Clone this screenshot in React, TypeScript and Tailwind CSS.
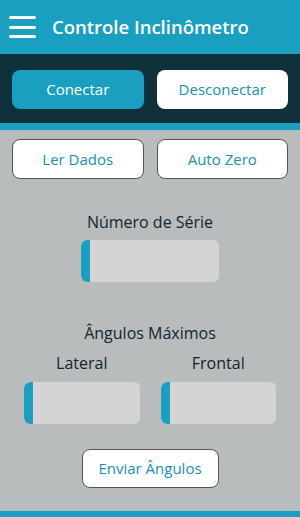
import React from "react";

const font = { fontFamily: '"Open Sans", "Noto Sans", sans-serif' };

const Field = ({ className = "" }: { className?: string }) => (
    <div className={`flex h-[42px] rounded-[6px] bg-[#d4d4d4] overflow-hidden ${className}`}>
        <div className="w-[9px] bg-[#1a9fc1] rounded-l-[6px]" />
    </div>
);

export default function App() {
    return (
        <div className="flex flex-col w-[300px] h-[517px] bg-[#b8bcbd] font-['Open_Sans',sans-serif]" style={font}>
            {/* Header */}
            <div className="flex items-center h-[54px] bg-[#1a9fc1] px-[9px] shrink-0">
                <div className="flex flex-col gap-[6.5px] w-[27px]">
                    <span className="block h-[3px] rounded-full bg-white" />
                    <span className="block h-[3px] rounded-full bg-white" />
                    <span className="block h-[3px] rounded-full bg-white" />
                </div>
                <h1 className="ml-[16px] text-[18.5px] font-semibold text-white leading-none">Controle Inclinômetro</h1>
            </div>

            {/* Connection bar */}
            <div className="grid grid-cols-2 gap-[13px] bg-[#0f313c] px-[12px] pt-[16px] pb-[14px] shrink-0">
                <button className="h-[39px] rounded-[8px] bg-[#1a9fc1] text-white text-[15px]">Conectar</button>
                <button className="h-[39px] rounded-[8px] bg-white text-[#1a8fb0] text-[15px]">Desconectar</button>
            </div>
            <div className="h-[7px] bg-[#1a9fc1] shrink-0" />

            {/* Content */}
            <div className="flex flex-col flex-1 px-[12px]">
                <div className="grid grid-cols-2 gap-[13px] mt-[9px]">
                    <button className="h-[40px] rounded-[8px] bg-white border border-[#555] text-[#1a8fb0] text-[15px]">Ler Dados</button>
                    <button className="h-[40px] rounded-[8px] bg-white border border-[#555] text-[#1a8fb0] text-[15px]">Auto Zero</button>
                </div>

                <p className="mt-[32px] text-center text-[16px] leading-[22px] text-[#10262e]">Número de Série</p>
                <Field className="mt-[7px] w-[138px] mx-auto" />

                <p className="mt-[40px] text-center text-[16px] leading-[22px] text-[#10262e]">Ângulos Máximos</p>
                <div className="grid grid-cols-2 gap-[21px] px-[12px] mt-[8px]">
                    <div className="flex flex-col">
                        <p className="text-center text-[16px] leading-[22px] text-[#10262e]">Lateral</p>
                        <Field className="mt-[8px] h-[41px]" />
                    </div>
                    <div className="flex flex-col">
                        <p className="text-center text-[16px] leading-[22px] text-[#10262e]">Frontal</p>
                        <Field className="mt-[8px] h-[41px]" />
                    </div>
                </div>

                <button className="mt-[25px] mx-auto w-[137px] h-[39px] rounded-[8px] bg-white border border-[#555] text-[#1a8fb0] text-[15px]">Enviar Ângulos</button>
            </div>
            <div className="h-[6px] bg-[#1a9fc1] shrink-0" />
        </div>
    );
}
